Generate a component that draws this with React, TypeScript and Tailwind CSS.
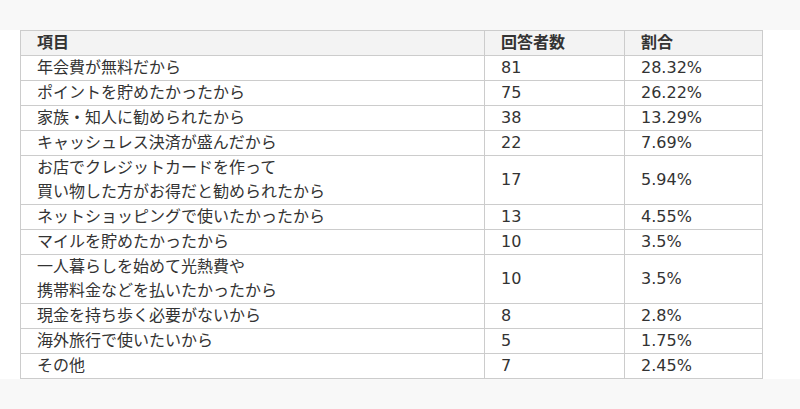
import React from "react";

type Row = { label: string[]; count: number; rate: string };

const rows: Row[] = [
  { label: ["年会費が無料だから"], count: 81, rate: "28.32%" },
  { label: ["ポイントを貯めたかったから"], count: 75, rate: "26.22%" },
  { label: ["家族・知人に勧められたから"], count: 38, rate: "13.29%" },
  { label: ["キャッシュレス決済が盛んだから"], count: 22, rate: "7.69%" },
  {
    label: ["お店でクレジットカードを作って", "買い物した方がお得だと勧められたから"],
    count: 17,
    rate: "5.94%",
  },
  { label: ["ネットショッピングで使いたかったから"], count: 13, rate: "4.55%" },
  { label: ["マイルを貯めたかったから"], count: 10, rate: "3.5%" },
  {
    label: ["一人暮らしを始めて光熱費や", "携帯料金などを払いたかったから"],
    count: 10,
    rate: "3.5%",
  },
  { label: ["現金を持ち歩く必要がないから"], count: 8, rate: "2.8%" },
  { label: ["海外旅行で使いたいから"], count: 5, rate: "1.75%" },
  { label: ["その他"], count: 7, rate: "2.45%" },
];

const cell = "border border-[#cccccc] px-4 py-0 align-middle";

const App: React.FC = () => {
  return (
    <div
      className="min-h-screen bg-[#f8f8f8] pt-[30px] text-[#333333] text-[16px] leading-[24px]"
      style={{ fontFamily: '"DejaVu Sans", "Noto Sans CJK JP", sans-serif' }}
    >
      <div className="bg-white pl-5">
        <table className="w-[742px] table-fixed border-collapse">
          <colgroup>
            <col className="w-[464px]" />
            <col className="w-[140px]" />
            <col className="w-[138px]" />
          </colgroup>
          <thead>
            <tr className="bg-[#f3f3f3] text-left font-bold">
              <th className={cell}>項目</th>
              <th className={cell}>回答者数</th>
              <th className={cell}>割合</th>
            </tr>
          </thead>
          <tbody>
            {rows.map((r, i) => (
              <tr key={i}>
                <td className={cell}>
                  {r.label.map((line, j) => (
                    <div key={j}>{line}</div>
                  ))}
                </td>
                <td className={cell}>{r.count}</td>
                <td className={cell}>{r.rate}</td>
              </tr>
            ))}
          </tbody>
        </table>
      </div>
    </div>
  );
};

export default App;
